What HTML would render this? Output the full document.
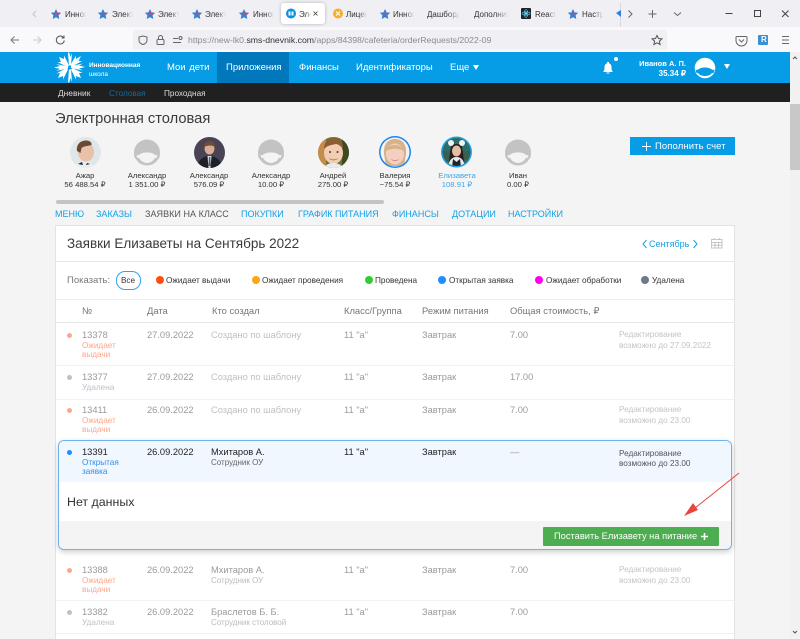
<!DOCTYPE html>
<html lang="ru">
<head>
<meta charset="utf-8">
<title>Электронная столовая</title>
<style>
html,body{margin:0;padding:0;width:800px;height:638px;overflow:hidden;background:#f4f4f4;font-family:"Liberation Sans",sans-serif}
.a{position:absolute}
.t{position:absolute;white-space:nowrap;line-height:12px;font-size:9px;color:#333}
.c{transform:translateX(-50%)}
.d{position:absolute;border-radius:50%}
.g{color:#9a9a9a}
.s{font-size:8px}
.f{font-size:8.2px;top:275px}
.av{font-size:7.7px}
.h{color:#777;font-size:9.4px}
.n{font-size:9.3px}
.o{color:#ffa78a;font-size:8.2px}
.u{color:#bcc2c9;font-size:8.2px}
.l{color:#c4c4c4;font-size:8.2px}
.sep{position:absolute;left:56px;width:678px;height:1px;background:#f2f2f2}
.m{position:absolute;top:208px;font-size:9px;line-height:12px;color:#14a0e8;white-space:nowrap}
.v{font-size:9.5px;color:#fff;top:62px}
.tb{position:absolute;top:10px;font-size:8px;line-height:10px;color:#333;white-space:nowrap;width:21px;overflow:hidden;-webkit-mask-image:linear-gradient(90deg,#000 60%,transparent)}
svg{position:absolute;display:block}
</style>
</head>
<body>
<!-- Tab bar -->
<div class="a" style="left:0;top:0;width:800px;height:27px;background:#f0f0f4"></div>
<div class="a" style="left:0;top:27px;width:800px;height:25px;background:#f9f9fb"></div>
<div class="a" style="left:281px;top:3px;width:44px;height:21px;background:#fff;border-radius:3px;box-shadow:0 0 3px rgba(0,0,0,.25)"></div>
<div class="a" style="left:620px;top:3px;width:1px;height:24px;background:#d8d8dc"></div>
<svg style="left:0;top:0" width="800" height="52" viewBox="0 0 800 52" fill="none">
<path d="M36 11l-3 3 3 3" stroke="#c4c4c8"/>
<g fill="#3a7fd5"><path d="M56 9l1.600 3.400 3.600.4-2.600 2.500.7 3.700-3.300-1.800-3.300 1.800.7-3.700-2.600-2.500 3.600-.4z"/><path d="M103 9l1.600 3.400 3.600.4-2.600 2.500.7 3.700-3.300-1.800-3.300 1.800.7-3.700-2.600-2.500 3.600-.4z"/><path d="M150 9l1.600 3.400 3.600.4-2.600 2.500.7 3.700-3.300-1.800-3.300 1.800.7-3.700-2.600-2.500 3.600-.4z"/><path d="M197 9l1.600 3.400 3.600.4-2.600 2.500.7 3.700-3.300-1.800-3.300 1.800.7-3.700-2.600-2.500 3.600-.4z"/><path d="M244 9l1.600 3.400 3.600.4-2.600 2.500.7 3.700-3.300-1.800-3.300 1.800.7-3.700-2.600-2.500 3.600-.4z"/><path d="M385 9l1.600 3.400 3.600.4-2.600 2.500.7 3.700-3.300-1.800-3.300 1.800.7-3.700-2.600-2.500 3.600-.4z"/><path d="M573 9l1.600 3.400 3.600.4-2.600 2.500.7 3.700-3.300-1.800-3.300 1.800.7-3.700-2.600-2.500 3.600-.4z"/></g>
<g stroke="#e8464a" stroke-width="1"><path d="M56 12l1 2 2 .2M103 12l1 2 2 .2M150 12l1 2 2 .2M197 12l1 2 2 .2M244 12l1 2 2 .2M385 12l1 2 2 .2M573 12l1 2 2 .2"/></g>
<circle cx="291" cy="13.500" r="5" fill="#0b8fe0"/><path d="M288.500 11.500h2v4h-2zM291.500 11.500h2v4h-2z" fill="#fff"/>
<circle cx="338" cy="13.500" r="5" fill="#f4b02c"/><path d="M336 11.500l4 4M340 11.500l-4 4" stroke="#fff"/>
<rect x="521" y="8" width="10" height="11" rx="1" fill="#20232a"/><circle cx="526" cy="13.500" r="1.200" fill="#61dafb"/><ellipse cx="526" cy="13.500" rx="4" ry="1.700" stroke="#61dafb" stroke-width=".6"/><ellipse cx="526" cy="13.500" rx="1.700" ry="4" stroke="#61dafb" stroke-width=".6"/>
<path d="M616 13l5-3v7z" fill="#2f7fd8"/>
<path d="M313.500 11.500l4 4M317.500 11.500l-4 4" stroke="#444" stroke-width=".8"/>
<path d="M628.500 10.500l3.500 3.500-3.500 3.500" stroke="#666"/>
<path d="M652.500 10v8M648.500 14h8" stroke="#666"/>
<path d="M674 12.500l3.500 3 3.500-3" stroke="#666"/>
<path d="M725.500 13.500h7" stroke="#444"/>
<rect x="754.500" y="10.500" width="6" height="6" stroke="#444"/>
<path d="M782 10.500l6.500 6.500M788.500 10.500l-6.500 6.500" stroke="#444"/>
<!-- toolbar -->
<rect x="133" y="30" width="534" height="19.500" rx="3" fill="#f0f0f4"/>
<path d="M19 40h-8m3.500-3.500L11 40l3.500 3.500" stroke="#777"/>
<path d="M33 40h8m-3.500-3.500L41 40l-3.500 3.500" stroke="#c8c8cc"/>
<path d="M63.500 37.500a4 4 0 1 0 .8 3M64 35.500v2.500h-2.500" stroke="#555"/>
<path d="M143 36l-4 1v3c0 2.500 2 4 4 4.500 2-.5 4-2 4-4.500v-3z" stroke="#666"/>
<rect x="157" y="39.500" width="7" height="5" rx="1" stroke="#666"/><path d="M158.500 39.500V37.500a2 2 0 0 1 4 0v2" stroke="#666"/>
<path d="M173 38.500h5M173 42.500h8" stroke="#666"/><circle cx="180.500" cy="38" r="1.500" stroke="#666"/>
<path d="M657 35.500l1.500 3 3.400.4-2.500 2.300.7 3.300-3.100-1.700-3.100 1.700.7-3.300-2.500-2.300 3.400-.4z" stroke="#555"/>
<path d="M737 36.500h9a1 1 0 0 1 1 1v3a5 5 0 0 1-11 0v-3a1 1 0 0 1 1-1z" stroke="#666"/><path d="M739 39.500l2.500 2.500 2.500-2.500" stroke="#666"/>
<rect x="758" y="35" width="10" height="10" rx="1" fill="#3b8fd4"/>
<path d="M782 36.500h7M782 40h7M782 43.500h7" stroke="#666"/>
</svg>
<div class="tb" style="left:65px">Инновационная</div>
<div class="tb" style="left:112px">Электронная</div>
<div class="tb" style="left:158px">Электронная</div>
<div class="tb" style="left:205px">Электронная</div>
<div class="tb" style="left:253px">Инновационная</div>
<div class="tb" style="left:299px;width:12px">Электронная</div>
<div class="tb" style="left:346px">Лицей</div>
<div class="tb" style="left:393px">Инновационная</div>
<div class="tb" style="left:427px;width:33px">Дашборд</div>
<div class="tb" style="left:474px;width:35px">Дополнительно</div>
<div class="tb" style="left:535px">React</div>
<div class="tb" style="left:582px">Настройки</div>
<div class="t" style="left:188px;top:34px;font-size:8.700px;line-height:13px;color:#8a8a8e">https://new-lk0.<span style="color:#333">sms-dnevnik.com</span>/apps/84398/cafeteria/orderRequests/2022-09</div>
<div class="t" style="left:761px;top:34px;color:#fff;font-size:8px;font-weight:bold;line-height:12px">R</div>

<!-- Header -->
<div class="a" style="left:0;top:52px;width:790px;height:31px;background:#069de6"></div>
<div class="a" style="left:217px;top:52px;width:72px;height:31px;background:#0278bc"></div>
<div class="a" style="left:0;top:83px;width:790px;height:19px;background:#202020"></div>
<svg style="left:54px;top:52px" width="32" height="31" viewBox="0 0 32 31" fill="#fff">
<path d="M15 0l1.500 5L18 1l-1 12.500h-2L14 1z"/><path d="M15 31l1.500-5 1.500 4-1-12.500h-2L14 30z"/>
<path d="M0 15.500l6-1.500-4-2 12 2.500v2L2 19l4-2z"/><path d="M31 15l-6 1.500 4 2-12-2.500v-2L29 11.500l-4 2z"/>
<path d="M5 5l5 2 0-3.500 5 10-1.500 1.500-10-5h3.500z"/><path d="M27 4l-2.500 5h3.500l-10 5.500L16.500 13 22 3.500l0 3.500z"/>
<path d="M4 26l2-5-3.500.500 10-5.500 1.500 1.500L9 27.500l0-3.500z"/><path d="M27 26l-5-2v3.500l-5-10 1.500-1.500 10 5h-3.500z"/>
</svg>
<div class="t" style="left:89px;top:61px;font-size:6.500px;line-height:9px;color:#fff;font-weight:bold">Инновационная<br><span style="font-weight:normal">школа</span></div>
<div class="t v" style="left:167px;font-size:9.500px;word-spacing:1px">Мои дети</div>
<div class="t v" style="left:226px">Приложения</div>
<div class="t v" style="left:299px">Финансы</div>
<div class="t v" style="left:356px">Идентификаторы</div>
<div class="t v" style="left:450px">Еще</div>
<svg style="left:472px;top:65px" width="8" height="6"><path d="M1 0h6L4 5z" fill="#fff"/></svg>
<svg style="left:600px;top:60px" width="16" height="16"><path d="M3 12c1-1 1.500-2 1.500-5 0-2 1-3.300 2.500-3.800V2h2v1.200c1.500.5 2.500 1.800 2.500 3.800 0 3 .5 4 1.500 5z" fill="#fff"/><path d="M6.500 12.500h3v1h-3z" fill="#fff"/></svg>
<div class="d" style="left:614px;top:57px;width:4px;height:4px;background:#fff"></div>
<div class="t" style="right:114px;top:58px;font-size:7.500px;line-height:12px;color:#fff;font-weight:bold">Иванов А. П.</div>
<div class="t" style="right:114px;top:68px;font-size:8px;line-height:12px;color:#fff;font-weight:bold">35.34 ₽</div>
<svg style="left:694px;top:57px" width="24" height="22" viewBox="0 0 24 22"><circle cx="11" cy="11" r="10.300" fill="#fff"/><path d="M1.500 12.500c1 .5 2 .5 3.500-.5 1.500-1 3-1.500 6-1.500s4.500.5 6 1.500c1.500 1 2.500 1 3.500.5l-.6 3c-.7.5-1.400.5-2 .5-.9 1.800-3.600 3-6.900 3s-6-1.200-6.900-3c-.6 0-1.300 0-2-.5z" fill="#069de6"/></svg>
<svg style="left:723px;top:64px" width="8" height="6"><path d="M1 0h6L4 5z" fill="#fff"/></svg>
<div class="t" style="left:58px;top:87px;font-size:8.400px;color:#ddd">Дневник</div>
<div class="t" style="left:109px;top:88px;font-size:8.200px;color:#13699f">Столовая</div>
<div class="t" style="left:164px;top:88px;font-size:8.200px;color:#ddd">Проходная</div>

<!-- Scrollbar -->
<div class="a" style="left:790px;top:52px;width:10px;height:586px;background:#f1f1f1"></div>
<div class="a" style="left:790px;top:104px;width:10px;height:66px;background:#c8c8c8"></div>
<svg style="left:790px;top:52px" width="10" height="586"><path d="M3 7l2-2 2 2" fill="none" stroke="#555"/><path d="M3 579l2 2 2-2" fill="none" stroke="#555"/></svg>

<!-- Page title -->
<div class="t" style="left:55px;top:110px;font-size:14.700px;line-height:19px;color:#3a3a3a">Электронная столовая</div>

<!-- Avatars -->
<svg style="left:70px;top:137px" width="31" height="31" viewBox="0 0 31 31"><defs><clipPath id="c1"><circle cx="15.500" cy="15.500" r="15.500"/></clipPath></defs><g clip-path="url(#c1)"><rect width="31" height="31" fill="#dfe7e8"/><ellipse cx="16" cy="15" rx="8" ry="9.500" fill="#e9c0a8"/><path d="M7 14C6 6 12 3 17 3.500c4 .5 5 3 4.500 4.500-3 1-8 1-10 3l-1 5z" fill="#6a4a35"/><path d="M5 31c1-5 5-7 10-6s9 2 10 6z" fill="#e9eef2"/><path d="M8 27l4-2 1 3zM20 27l-3-1-1 2z" fill="#1c2430"/></g></svg>
<svg style="left:194px;top:137px" width="31" height="31" viewBox="0 0 31 31"><defs><clipPath id="c2"><circle cx="15.500" cy="15.500" r="15.500"/></clipPath></defs><g clip-path="url(#c2)"><rect width="31" height="31" fill="#4a4356"/><ellipse cx="15.500" cy="11.500" rx="5" ry="6" fill="#d8ac96"/><path d="M10 10c0-5 3-6 6-6s5 2 5 6c-3-2-7-2-11 0z" fill="#6d4c38"/><path d="M3 31c1-8 6-12 12.500-12S27 23 28 31z" fill="#1e2028"/><path d="M13.500 19h4l-1 12h-2z" fill="#d8dde2"/><path d="M15 20h1.200l.5 9h-2.200z" fill="#50555e"/></g></svg>
<svg style="left:318px;top:137px" width="31" height="31" viewBox="0 0 31 31"><defs><clipPath id="c3"><circle cx="15.500" cy="15.500" r="15.500"/></clipPath></defs><g clip-path="url(#c3)"><rect width="31" height="31" fill="#6f7436"/><rect width="8" height="31" fill="#c68c4c"/><rect x="24" width="7" height="31" fill="#3e4a22"/><ellipse cx="15.500" cy="16" rx="9.500" ry="11" fill="#f2cdb2"/><path d="M6 12C6 4 11 1 16 1s9.500 3 9 10c-3-2-5-4-7-4-4 1-8 1-12 5z" fill="#8d5d33"/><path d="M6 31c1-3 5-5 9.500-5s8 2 9.500 5z" fill="#e6ecef"/><path d="M11 21c2 2 7 2 9 0-1 3-8 3-9 0z" fill="#a9655a"/><circle cx="12" cy="15" r="1" fill="#4c3a30"/><circle cx="19.500" cy="15" r="1" fill="#4c3a30"/></g></svg>
<svg style="left:379px;top:136px" width="32" height="32" viewBox="0 0 32 32"><defs><clipPath id="c4"><circle cx="16" cy="16" r="14.500"/></clipPath></defs><circle cx="16" cy="16" r="16" fill="#1c86ee"/><circle cx="16" cy="16" r="14.500" fill="#f5f3f1"/><g clip-path="url(#c4)"><path d="M5 18C4 6 11 3 16 3s12 3 11 15l-2 12H7z" fill="#d7b187"/><ellipse cx="16" cy="18" rx="9" ry="10.500" fill="#f3cfc0"/><path d="M7 15c1-5 5-6 9-6s8 2 9 6c-5-3-13-3-18 0z" fill="#d7b187"/><path d="M12 23c2 1.500 6 1.500 8 0-1 2.500-7 2.500-8 0z" fill="#c87a74"/></g></svg>
<svg style="left:441px;top:136px" width="31" height="32" viewBox="0 0 31 32"><defs><clipPath id="c5"><circle cx="15.500" cy="16" r="14"/></clipPath></defs><circle cx="15.500" cy="16" r="15.500" fill="#22a3e8"/><circle cx="15.500" cy="16" r="14" fill="#39604f"/><g clip-path="url(#c5)"><rect width="31" height="15" fill="#2b6f6a"/><path d="M8 31c0-8 1-15 2-20 1-4 10-4 11 0 1 5 2 12 2 20z" fill="#2a1e1e"/><ellipse cx="15.500" cy="15" rx="4.500" ry="5.500" fill="#e4bda6"/><circle cx="10" cy="7" r="3" fill="#f2f2f2"/><circle cx="21" cy="7" r="3" fill="#f2f2f2"/><path d="M7 31c1-7 4-10 8.500-10S23 24 24 31z" fill="#e9e9e9"/><path d="M11 31l1-8 3.500 3 3.500-3 1 8z" fill="#1e2430"/></g></svg>
<svg style="left:134px;top:139px" width="26" height="27" viewBox="0 0 26 27"><circle cx="13" cy="13.500" r="13" fill="#c3c3c3"/><path d="M.5 15c-.8 1.500-.5 4 2 5.500l2-6zM25.500 15c.8 1.500.5 4-2 5.500l-2-6z" fill="#c3c3c3"/><path d="M2.500 16c1 .5 2 .3 3.200-.6 2-1.400 3.900-1.900 7.300-1.900s5.300.5 7.300 1.900c1.200.9 2.200 1.100 3.200.6l-.5 2.500c-.7.4-1.400.4-2 .3-1.300 2.700-4.300 5.200-8 5.200s-6.700-2.500-8-5.200c-.6.100-1.300.1-2-.3z" fill="#f4f4f4"/></svg>
<svg style="left:258px;top:139px" width="26" height="27" viewBox="0 0 26 27"><circle cx="13" cy="13.500" r="13" fill="#c3c3c3"/><path d="M.5 15c-.8 1.500-.5 4 2 5.500l2-6zM25.500 15c.8 1.500.5 4-2 5.500l-2-6z" fill="#c3c3c3"/><path d="M2.500 16c1 .5 2 .3 3.200-.6 2-1.400 3.900-1.900 7.300-1.900s5.300.5 7.300 1.900c1.200.9 2.200 1.100 3.200.6l-.5 2.500c-.7.4-1.400.4-2 .3-1.300 2.700-4.300 5.200-8 5.200s-6.700-2.500-8-5.200c-.6.100-1.300.1-2-.3z" fill="#f4f4f4"/></svg>
<svg style="left:505px;top:139px" width="26" height="27" viewBox="0 0 26 27"><circle cx="13" cy="13.500" r="13" fill="#c3c3c3"/><path d="M.5 15c-.8 1.500-.5 4 2 5.500l2-6zM25.500 15c.8 1.500.5 4-2 5.500l-2-6z" fill="#c3c3c3"/><path d="M2.500 16c1 .5 2 .3 3.200-.6 2-1.400 3.900-1.900 7.300-1.900s5.300.5 7.300 1.900c1.200.9 2.200 1.100 3.200.6l-.5 2.500c-.7.4-1.400.4-2 .3-1.300 2.700-4.300 5.200-8 5.200s-6.700-2.500-8-5.200c-.6.100-1.300.1-2-.3z" fill="#f4f4f4"/></svg>

<div class="t c av" style="left:85px;top:170px">Ажар</div><div class="t c av" style="left:85px;top:179px">56 488.54 ₽</div>
<div class="t c av" style="left:147px;top:170px">Александр</div><div class="t c av" style="left:147px;top:179px">1 351.00 ₽</div>
<div class="t c av" style="left:209px;top:170px">Александр</div><div class="t c av" style="left:209px;top:179px">576.09 ₽</div>
<div class="t c av" style="left:271px;top:170px">Александр</div><div class="t c av" style="left:271px;top:179px">10.00 ₽</div>
<div class="t c av" style="left:333px;top:170px">Андрей</div><div class="t c av" style="left:333px;top:179px">275.00 ₽</div>
<div class="t c av" style="left:395px;top:170px">Валерия</div><div class="t c av" style="left:395px;top:179px">−75.54 ₽</div>
<div class="t c av" style="left:457px;top:170px;color:#3aa6e8">Елизавета</div><div class="t c av" style="left:457px;top:179px;color:#3aa6e8">108.91 ₽</div>
<div class="t c av" style="left:518px;top:170px">Иван</div><div class="t c av" style="left:518px;top:179px">0.00 ₽</div>

<div class="a" style="left:56px;top:200px;width:328px;height:4px;background:#c4c4c4;border-radius:2px"></div>

<!-- Refill button -->
<div class="a" style="left:630px;top:137px;width:105px;height:18px;background:#069de6"></div>
<svg style="left:641px;top:141px" width="11" height="11"><path d="M5.500 1v9M1 5.500h9" stroke="#fff" stroke-width=".9"/></svg>
<div class="t" style="left:655px;top:141px;font-size:9.500px;color:#fff;letter-spacing:.1px">Пополнить счет</div>

<!-- Menu -->
<div class="m" style="left:55px">МЕНЮ</div>
<div class="m" style="left:96px">ЗАКАЗЫ</div>
<div class="m" style="left:145px;color:#555;letter-spacing:.05px">ЗАЯВКИ НА КЛАСС</div>
<div class="m" style="left:241px">ПОКУПКИ</div>
<div class="m" style="left:298px">ГРАФИК ПИТАНИЯ</div>
<div class="m" style="left:392px">ФИНАНСЫ</div>
<div class="m" style="left:452px">ДОТАЦИИ</div>
<div class="m" style="left:508px">НАСТРОЙКИ</div>

<!-- Card -->
<div class="a" style="left:55px;top:225px;width:678px;height:413px;background:#fff;border:1px solid #e3e3e3;border-bottom:0"></div>
<div class="a" style="left:56px;top:261px;width:678px;height:1px;background:#e6e6e6"></div>
<div class="a" style="left:56px;top:299px;width:678px;height:1px;background:#ededed"></div>
<div class="a" style="left:56px;top:322px;width:678px;height:1px;background:#e8e8e8"></div>
<div class="t" style="left:67px;top:235px;font-size:13.500px;line-height:18px;color:#3a3a3a">Заявки Елизаветы на Сентябрь 2022</div>
<svg style="left:642px;top:239px" width="6" height="10"><path d="M4.500 1L1 5l3.500 4" fill="none" stroke="#14a0e8"/></svg>
<div class="t" style="left:649px;top:238px;font-size:9px;color:#14a0e8">Сентябрь</div>
<svg style="left:692px;top:239px" width="6" height="10"><path d="M1.500 1L5 5 1.500 9" fill="none" stroke="#14a0e8"/></svg>
<svg style="left:711px;top:237px" width="12" height="12"><path d="M.5 2.500h10.500v8.500H.5zM.5 5.500h10.500M.5 8.200h10.500M4 5.500V11M7.500 5.500V11M3 1v2M8.500 1v2" fill="none" stroke="#c6c6c6"/></svg>

<!-- Filters -->
<div class="t" style="left:67px;top:275px;color:#777;font-size:9.500px">Показать:</div>
<div class="a" style="left:116px;top:271px;width:23px;height:17px;border:1px solid #35a4e6;border-radius:9px;background:#fff"></div>
<div class="t c f" style="left:128px">Все</div>
<div class="d" style="left:156px;top:276px;width:8px;height:8px;background:#ff4f0f"></div><div class="t f" style="left:166px">Ожидает выдачи</div>
<div class="d" style="left:252px;top:276px;width:8px;height:8px;background:#ffa514"></div><div class="t f" style="left:262px">Ожидает проведения</div>
<div class="d" style="left:365px;top:276px;width:8px;height:8px;background:#33cc33"></div><div class="t f" style="left:375px">Проведена</div>
<div class="d" style="left:438px;top:276px;width:8px;height:8px;background:#1e8fff"></div><div class="t f" style="left:449px">Открытая заявка</div>
<div class="d" style="left:535px;top:276px;width:8px;height:8px;background:#ff00ee"></div><div class="t f" style="left:546px">Ожидает обработки</div>
<div class="d" style="left:641px;top:276px;width:8px;height:8px;background:#6c7a89"></div><div class="t f" style="left:652px">Удалена</div>

<!-- Table head -->
<div class="t h" style="left:82px;top:305px">№</div>
<div class="t h" style="left:147px;top:305px">Дата</div>
<div class="t h" style="left:212px;top:305px">Кто создал</div>
<div class="t h" style="left:344px;top:305px">Класс/Группа</div>
<div class="t h" style="left:422px;top:305px">Режим питания</div>
<div class="t h" style="left:510px;top:305px">Общая стоимость, ₽</div>

<!-- Row 13378 -->
<div class="d" style="left:67px;top:333px;width:5px;height:5px;background:#ffa78a"></div>
<div class="t g n" style="left:82px;top:329px">13378</div>
<div class="t o" style="left:82px;top:340px">Ожидает</div><div class="t o" style="left:82px;top:349px">выдачи</div>
<div class="t g n" style="left:147px;top:329px">27.09.2022</div>
<div class="t n" style="left:211px;top:329px;color:#c0c0c0">Создано по шаблону</div>
<div class="t g n" style="left:344px;top:329px">11 "а"</div>
<div class="t g n" style="left:422px;top:329px">Завтрак</div>
<div class="t g n" style="left:510px;top:329px">7.00</div>
<div class="t l" style="left:619px;top:329px">Редактирование</div><div class="t l" style="left:619px;top:340px">возможно до 27.09.2022</div>
<div class="sep" style="top:365px"></div>

<!-- Row 13377 -->
<div class="d" style="left:67px;top:375px;width:5px;height:5px;background:#bcc2c9"></div>
<div class="t g n" style="left:82px;top:371px">13377</div>
<div class="t u" style="left:82px;top:382px">Удалена</div>
<div class="t g n" style="left:147px;top:371px">27.09.2022</div>
<div class="t n" style="left:211px;top:371px;color:#c0c0c0">Создано по шаблону</div>
<div class="t g n" style="left:344px;top:371px">11 "а"</div>
<div class="t g n" style="left:422px;top:371px">Завтрак</div>
<div class="t g n" style="left:510px;top:371px">17.00</div>
<div class="sep" style="top:399px"></div>

<!-- Row 13411 -->
<div class="d" style="left:67px;top:408px;width:5px;height:5px;background:#ffa78a"></div>
<div class="t g n" style="left:82px;top:404px">13411</div>
<div class="t o" style="left:82px;top:415px">Ожидает</div><div class="t o" style="left:82px;top:424px">выдачи</div>
<div class="t g n" style="left:147px;top:404px">26.09.2022</div>
<div class="t n" style="left:211px;top:404px;color:#c0c0c0">Создано по шаблону</div>
<div class="t g n" style="left:344px;top:404px">11 "а"</div>
<div class="t g n" style="left:422px;top:404px">Завтрак</div>
<div class="t g n" style="left:510px;top:404px">7.00</div>
<div class="t l" style="left:619px;top:404px">Редактирование</div><div class="t l" style="left:619px;top:415px">возможно до 23.00</div>

<!-- Selected block -->
<div class="a" style="left:58px;top:440px;width:672px;height:108px;background:#fff;border:1px solid #6fb3ee;border-radius:6px;box-shadow:0 2px 6px rgba(0,0,0,.2);overflow:hidden">
  <div class="a" style="left:0;top:0;width:672px;height:41px;background:#f1f7fe"></div>
  <div class="a" style="left:0;top:80px;width:672px;height:28px;background:#f4f4f4"></div>
</div>
<div class="d" style="left:67px;top:450px;width:5px;height:5px;background:#1e8fff"></div>
<div class="t n" style="left:82px;top:446px;color:#222">13391</div>
<div class="t o" style="left:82px;top:457px;color:#2b8fef">Открытая</div><div class="t o" style="left:82px;top:466px;color:#2b8fef">заявка</div>
<div class="t n" style="left:147px;top:446px;color:#222">26.09.2022</div>
<div class="t n" style="left:211px;top:446px;color:#222">Мхитаров А.</div>
<div class="t s" style="left:211px;top:457px;color:#666">Сотрудник ОУ</div>
<div class="t n" style="left:344px;top:446px;color:#222">11 "а"</div>
<div class="t n" style="left:422px;top:446px;color:#222">Завтрак</div>
<div class="t n" style="left:510px;top:446px;color:#999">—</div>
<div class="t l" style="left:619px;top:448px;color:#555">Редактирование</div><div class="t l" style="left:619px;top:458px;color:#555">возможно до 23.00</div>
<div class="t" style="left:67px;top:494px;font-size:12.400px;line-height:16px;color:#333">Нет данных</div>
<div class="a" style="left:543px;top:527px;width:176px;height:19px;background:#4cae50;border-radius:1px"></div>
<div class="t" style="left:554px;top:530px;font-size:9.300px;color:#fff">Поставить Елизавету на питание</div>
<svg style="left:700px;top:532px" width="9" height="9"><path d="M4.500 1v7M1 4.500h7" stroke="#fff" stroke-width="1.500"/></svg>

<!-- Row 13388 -->
<div class="d" style="left:67px;top:568px;width:5px;height:5px;background:#ffa78a"></div>
<div class="t g n" style="left:82px;top:564px">13388</div>
<div class="t o" style="left:82px;top:575px">Ожидает</div><div class="t o" style="left:82px;top:584px">выдачи</div>
<div class="t g n" style="left:147px;top:564px">26.09.2022</div>
<div class="t g n" style="left:211px;top:564px">Мхитаров А.</div>
<div class="t s" style="left:211px;top:575px;color:#bbb">Сотрудник ОУ</div>
<div class="t g n" style="left:344px;top:564px">11 "а"</div>
<div class="t g n" style="left:422px;top:564px">Завтрак</div>
<div class="t g n" style="left:510px;top:564px">7.00</div>
<div class="t l" style="left:619px;top:564px">Редактирование</div><div class="t l" style="left:619px;top:575px">возможно до 23.00</div>
<div class="sep" style="top:600px"></div>

<!-- Row 13382 -->
<div class="d" style="left:67px;top:610px;width:5px;height:5px;background:#bcc2c9"></div>
<div class="t g n" style="left:82px;top:606px">13382</div>
<div class="t u" style="left:82px;top:617px">Удалена</div>
<div class="t g n" style="left:147px;top:606px">26.09.2022</div>
<div class="t g n" style="left:211px;top:606px">Браслетов Б. Б.</div>
<div class="t s" style="left:211px;top:617px;color:#bbb">Сотрудник столовой</div>
<div class="t g n" style="left:344px;top:606px">11 "а"</div>
<div class="t g n" style="left:422px;top:606px">Завтрак</div>
<div class="t g n" style="left:510px;top:606px">7.00</div>
<div class="sep" style="top:633px"></div>

<!-- Red arrow -->
<svg style="left:680px;top:465px" width="64" height="60" viewBox="0 0 64 60"><path d="M59 8L15 43" stroke="#e8453c" stroke-width="1" fill="none"/><path d="M4 51l9-13 5 7z" fill="#e8453c"/></svg>
</body>
</html>
